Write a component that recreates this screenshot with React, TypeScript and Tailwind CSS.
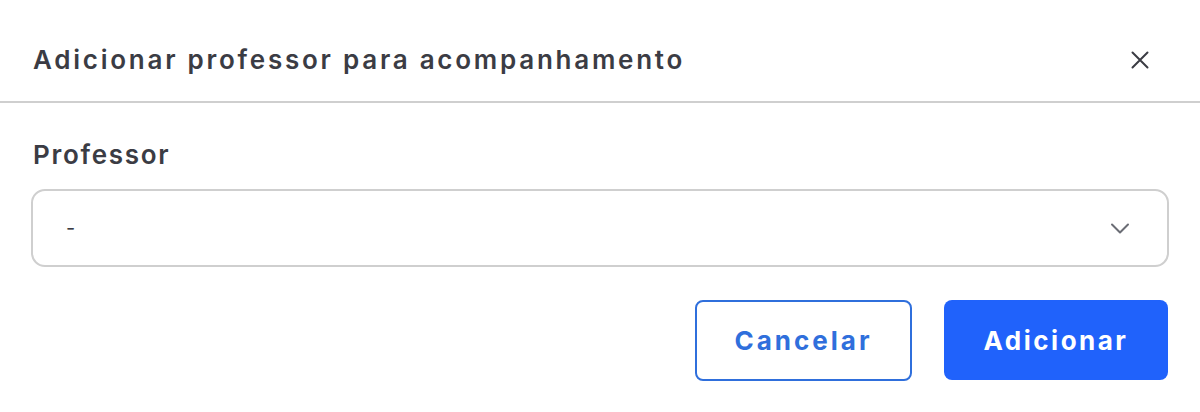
import React from 'react';

const font = { fontFamily: 'Inter, "Open Sans", sans-serif' };

const CloseIcon = () => (
  <svg width="18" height="18" viewBox="0 0 18 18" fill="none" stroke="currentColor" strokeWidth="2" strokeLinecap="round">
    <path d="M1.5 1.5l15 15M16.5 1.5l-15 15" />
  </svg>
);

const Chevron = () => (
  <svg width="20" height="11" viewBox="0 0 20 11" fill="none" stroke="currentColor" strokeWidth="2" strokeLinecap="round" strokeLinejoin="round">
    <path d="M2 1.5l8 8 8-8" />
  </svg>
);

const App: React.FC = () => {
  return (
    <div className="w-[1200px] h-[412px] bg-white flex flex-col" style={font}>
      {/* header */}
      <div className="h-[103px] pt-[18px] flex items-center justify-between pl-[33px] pr-[51px] border-b-2 border-[#cfcfcf]">
        <h2 className="text-[26px] font-semibold text-[#3b3c44] tracking-[2.75px]">
          Adicionar professor para acompanhamento
        </h2>
        <button className="text-[#3b3c44]">
          <CloseIcon />
        </button>
      </div>

      {/* body */}
      <div className="px-[31px] pt-[36px]">
        <label className="block pl-[2px] text-[26px] font-semibold text-[#3b3c44] leading-[32px] tracking-[1.7px]">
          Professor
        </label>
        <div className="mt-[18px] h-[78px] border-2 border-[#cfcfcf] rounded-[14px] flex items-center justify-between pl-[33px] pr-[37px]">
          <span className="text-[20px] text-[#3b3c44]">-</span>
          <span className="text-[#6b6d75]">
            <Chevron />
          </span>
        </div>

        <div className="mt-[33px] flex justify-end gap-[32px] pr-[1px]">
          <button className="w-[217px] h-[81px] rounded-[8px] border-2 border-[#2f6fdc] text-[#2f6fdc] text-[26px] font-bold tracking-[3px]">
            Cancelar
          </button>
          <button className="w-[224px] h-[80px] rounded-[8px] bg-[#2062fb] text-white text-[26px] font-bold tracking-[2.5px]">
            Adicionar
          </button>
        </div>
      </div>
    </div>
  );
};

export default App;
